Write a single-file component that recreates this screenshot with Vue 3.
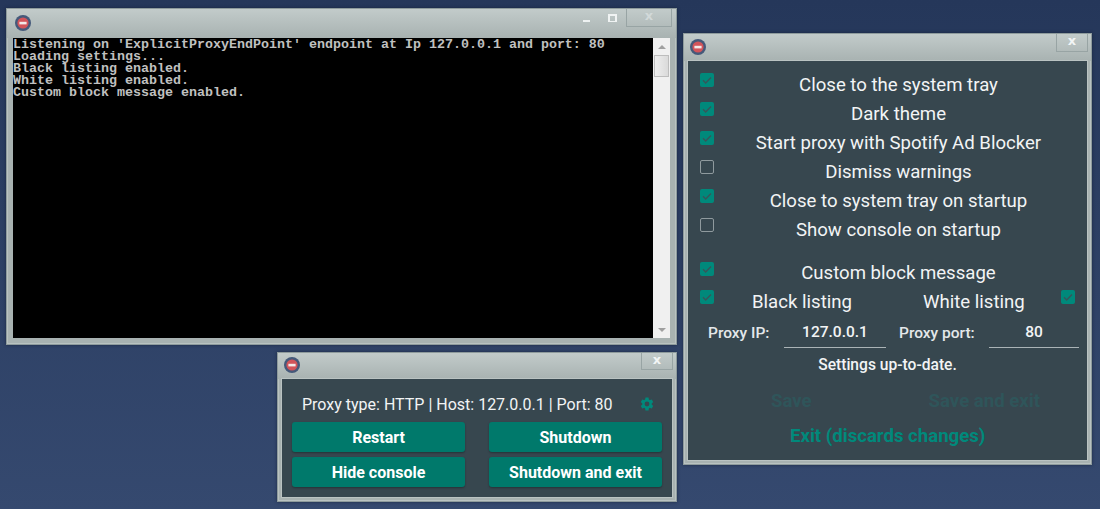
<script setup>
const consoleLines = [
  "Listening on 'ExplicitProxyEndPoint' endpoint at Ip 127.0.0.1 and port: 80",
  'Loading settings...',
  'Black listing enabled.',
  'White listing enabled.',
  'Custom block message enabled.'
]
const topOptions = [
  { label: 'Close to the system tray', on: true },
  { label: 'Dark theme', on: true },
  { label: 'Start proxy with Spotify Ad Blocker', on: true },
  { label: 'Dismiss warnings', on: false },
  { label: 'Close to system tray on startup', on: true },
  { label: 'Show console on startup', on: false }
]
</script>

<template>
  <div class="desktop">
    <section class="window win-console">
      <header class="titlebar">
        <svg class="app-icon" viewBox="0 0 16 16"><circle cx="8" cy="8" r="8" fill="#45597a"/><circle cx="8" cy="8" r="5.6" fill="#d2545a"/><rect x="4.4" y="6.8" width="7.2" height="2.6" fill="#f3e9e9"/></svg>
        <span class="spacer"></span>
        <span class="ctl-min"></span>
        <span class="ctl-restore"></span>
        <span class="close close-wide"><span>x</span></span>
      </header>
      <div class="console-body">
        <pre class="console-text">{{ consoleLines.join('\n') }}</pre>
        <div class="scrollbar">
          <span class="arrow up"></span>
          <span class="thumb"></span>
          <span class="track"></span>
          <span class="arrow down"></span>
        </div>
      </div>
    </section>

    <section class="window win-main">
      <header class="titlebar">
        <svg class="app-icon" viewBox="0 0 16 16"><circle cx="8" cy="8" r="8" fill="#45597a"/><circle cx="8" cy="8" r="5.6" fill="#d2545a"/><rect x="4.4" y="6.8" width="7.2" height="2.6" fill="#f3e9e9"/></svg>
        <span class="spacer"></span>
        <span class="close"><span>x</span></span>
      </header>
      <div class="panel main-panel">
        <div class="info-row">
          <span>Proxy type: HTTP | Host: 127.0.0.1 | Port: 80</span>
          <svg class="gear" viewBox="0 0 24 24"><path fill="#00897b" d="M19.14 12.94c.04-.3.06-.61.06-.94s-.02-.64-.07-.94l2.03-1.58a.49.49 0 0 0 .12-.61l-1.92-3.32a.49.49 0 0 0-.59-.22l-2.39.96a7 7 0 0 0-1.62-.94l-.36-2.54a.48.48 0 0 0-.48-.41h-3.84a.48.48 0 0 0-.47.41l-.36 2.54c-.59.24-1.13.57-1.62.94l-2.39-.96a.48.48 0 0 0-.59.22L2.74 8.87a.48.48 0 0 0 .12.61l2.03 1.58c-.05.3-.09.63-.09.94s.02.64.07.94l-2.03 1.58a.49.49 0 0 0-.12.61l1.92 3.32c.12.22.37.29.59.22l2.39-.96c.5.38 1.03.7 1.62.94l.36 2.54c.05.24.24.41.48.41h3.84c.24 0 .44-.17.47-.41l.36-2.54c.59-.24 1.13-.56 1.62-.94l2.39.96c.22.08.47 0 .59-.22l1.92-3.32a.48.48 0 0 0-.12-.61l-2.01-1.58zM12 15.6A3.6 3.6 0 1 1 12 8.4a3.6 3.6 0 0 1 0 7.2z"/></svg>
        </div>
        <div class="btn-grid">
          <button class="btn">Restart</button>
          <button class="btn">Shutdown</button>
          <button class="btn">Hide console</button>
          <button class="btn">Shutdown and exit</button>
        </div>
      </div>
    </section>

    <section class="window win-settings">
      <header class="titlebar">
        <svg class="app-icon" viewBox="0 0 16 16"><circle cx="8" cy="8" r="8" fill="#45597a"/><circle cx="8" cy="8" r="5.6" fill="#d2545a"/><rect x="4.4" y="6.8" width="7.2" height="2.6" fill="#f3e9e9"/></svg>
        <span class="spacer"></span>
        <span class="close"><span>x</span></span>
      </header>
      <div class="panel settings-panel">
        <div v-for="o in topOptions" :key="o.label" class="opt-row">
          <span class="check" :class="{ on: o.on }">
            <svg v-if="o.on" viewBox="0 0 14 14"><path d="M3 7.2l2.7 2.7L11 4.4" fill="none" stroke="#37565a" stroke-width="1.4"/></svg>
          </span>
          <span class="opt-label">{{ o.label }}</span>
        </div>
        <div class="opt-row custom-row">
          <span class="check on"><svg viewBox="0 0 14 14"><path d="M3 7.2l2.7 2.7L11 4.4" fill="none" stroke="#37565a" stroke-width="1.4"/></svg></span>
          <span class="opt-label">Custom block message</span>
        </div>
        <div class="opt-row list-row">
          <span class="check on"><svg viewBox="0 0 14 14"><path d="M3 7.2l2.7 2.7L11 4.4" fill="none" stroke="#37565a" stroke-width="1.4"/></svg></span>
          <span class="list-label black">Black listing</span>
          <span class="list-label white">White listing</span>
          <span class="check on"><svg viewBox="0 0 14 14"><path d="M3 7.2l2.7 2.7L11 4.4" fill="none" stroke="#37565a" stroke-width="1.4"/></svg></span>
        </div>
        <div class="field-row">
          <span class="field-label ip-label">Proxy IP:</span>
          <span class="field ip-field">127.0.0.1</span>
          <span class="field-label port-label">Proxy port:</span>
          <span class="field port-field">80</span>
        </div>
        <div class="status">Settings up-to-date.</div>
        <div class="save-row">
          <span class="save">Save</span>
          <span class="save-exit">Save and exit</span>
        </div>
        <div class="exit">Exit (discards changes)</div>
      </div>
    </section>
  </div>
</template>

<style>
html, body { margin: 0; padding: 0; background: #2c4064; }
</style>

<style scoped>
.desktop {
  position: relative;
  width: 1100px;
  height: 509px;
  overflow: hidden;
  font-family: Roboto, "Liberation Sans", sans-serif;
  background: linear-gradient(180deg, #25375a 0%, #35496f 100%);
}
.window {
  position: absolute;
  box-sizing: border-box;
  display: flex;
  flex-direction: column;
  background: #a8b2b1;
  border: 1px solid #8e9b9c;
  box-shadow: inset 0 0 0 1px #b9c2c1, 0 0 3px rgba(15, 25, 45, .6);
}
.win-console { left: 6px; top: 8px; width: 671px; height: 337px; padding: 0 6px 6px; }
.win-main { left: 277px; top: 352px; width: 400px; height: 150px; padding: 0 4px 4px; }
.win-settings { left: 683px; top: 33px; width: 409px; height: 432px; padding: 0 4px 4px; }
.titlebar {
  display: flex;
  align-items: flex-start;
  padding: 0 3px 0 6px;
  margin: 0 -4px;
  background: linear-gradient(180deg, #c2cbca 0%, #a8b2b1 100%);
  flex: none;
  height: 27px;
}
.win-console .titlebar { height: 29px; margin: 0 -6px; padding: 0 4px 0 8px; }
.win-main .titlebar { height: 26px; }
.app-icon { width: 16px; height: 16px; margin-top: 5px; flex: none; }
.win-console .app-icon { margin-top: 6px; }
.win-main .app-icon { margin-top: 4px; }
.spacer { flex: 1; }
.close {
  box-sizing: border-box;
  width: 32px;
  height: 18px;
  flex: none;
  border: 1px solid #98a4a4;
  border-top: 0;
  display: flex;
  align-items: center;
  justify-content: center;
  color: #f2f5f5;
  font: bold 13px/12px "DejaVu Sans", sans-serif;
  padding-bottom: 3px;
}
.win-main .close { height: 17px; }
.close-wide { width: 46px; color: #d2d9d9; }
.ctl-min {
  width: 7px; height: 2px; background: #eef2f2; margin: 11px 18px 0 0;
}
.ctl-restore {
  box-sizing: border-box;
  width: 9px; height: 8px; margin: 5px 9px 0 0;
  border: 2px solid #f0f3f3; border-bottom-width: 1px;
}
.console-body { flex: 1; display: flex; min-height: 0; }
.console-text {
  flex: 1;
  margin: 0;
  padding: 1px 0 0;
  background: #000;
  color: #c0c0c0;
  font: bold 13.33px/12px "Liberation Mono", monospace;
  overflow: hidden;
}
.scrollbar {
  width: 17px;
  flex: none;
  background: #f0f0f0;
  display: flex;
  flex-direction: column;
  align-items: center;
}
.arrow { width: 0; height: 0; border-left: 4px solid transparent; border-right: 4px solid transparent; flex: none; }
.arrow.up { border-bottom: 4px solid #a0a0a0; margin: 7px 0 6px; }
.arrow.down { border-top: 4px solid #a0a0a0; margin: 6px 0 6px; }
.thumb { box-sizing: border-box; width: 15px; height: 22px; background: linear-gradient(90deg, #eee, #dadada); border: 1px solid #bdbdbd; flex: none; }
.track { flex: 1; }
.panel { flex: 1; background: #37474f; color: #f2f4f5; min-height: 0; box-sizing: border-box; box-shadow: 0 0 0 1px #bac3c2; }
.main-panel { padding: 14px 10px 10px; }
.info-row {
  display: flex;
  align-items: center;
  justify-content: space-between;
  height: 22px;
  padding: 0 7px 0 10px;
  font-size: 16px;
  margin-bottom: 7px;
}
.gear { width: 16px; height: 16px; }
.btn-grid { display: grid; grid-template-columns: 173px 173px; justify-content: space-between; grid-auto-rows: 30px; row-gap: 5px; }
.btn {
  border: 0;
  margin: 0;
  padding: 0;
  border-radius: 3px;
  background: #00796b;
  color: #fff;
  font: 700 16px Roboto, sans-serif;
  box-shadow: 0 1px 2px rgba(0, 0, 0, .3);
}
.settings-panel { padding: 9px 4px 0 12px; }
.opt-row { display: flex; align-items: flex-start; height: 29px; }
.check {
  box-sizing: border-box;
  width: 14px;
  height: 14px;
  flex: none;
  margin-top: 3px;
  border-radius: 2px;
  border: 1.5px solid #8f9a9e;
}
.check.on { background: #00897b; border: 0; }
.check svg { display: block; width: 14px; height: 14px; }
.opt-label { flex: 1; text-align: center; font-size: 18.6px; line-height: 30px; }
.custom-row { margin-top: 14px; }
.custom-row .check { margin-top: 4px; }
.list-label { font-size: 18.6px; line-height: 30px; }
.list-row .black { margin-left: 38px; }
.list-row .white { margin-left: 71px; }
.list-row .check:last-child { margin-left: 36px; }
.field-row { display: flex; height: 32px; align-items: flex-start; font-size: 15.5px; }
.field-label { font-weight: 500; color: #e4e8ea; line-height: 34px; }
.ip-label { margin-left: 8px; width: 76px; }
.port-label { margin-left: 13px; width: 90px; }
.field { box-sizing: border-box; height: 32px; text-align: center; line-height: 32px; border-bottom: 1px solid #aab3b6; font-weight: 500; }
.ip-field { width: 102px; }
.port-field { width: 90px; }
.status { font-size: 15.6px; font-weight: 500; text-align: center; margin: 7px 0 0 -8px; line-height: 20px; }
.save-row { display: flex; font-size: 18.6px; font-weight: 700; color: #2f555a; height: 35px; line-height: 34px; margin-top: 9px; }
.save { margin-left: 71px; }
.save-exit { margin-left: 117px; }
.exit { font-size: 18.6px; font-weight: 700; color: #00897b; margin-left: 90px; line-height: 34px; }
</style>
